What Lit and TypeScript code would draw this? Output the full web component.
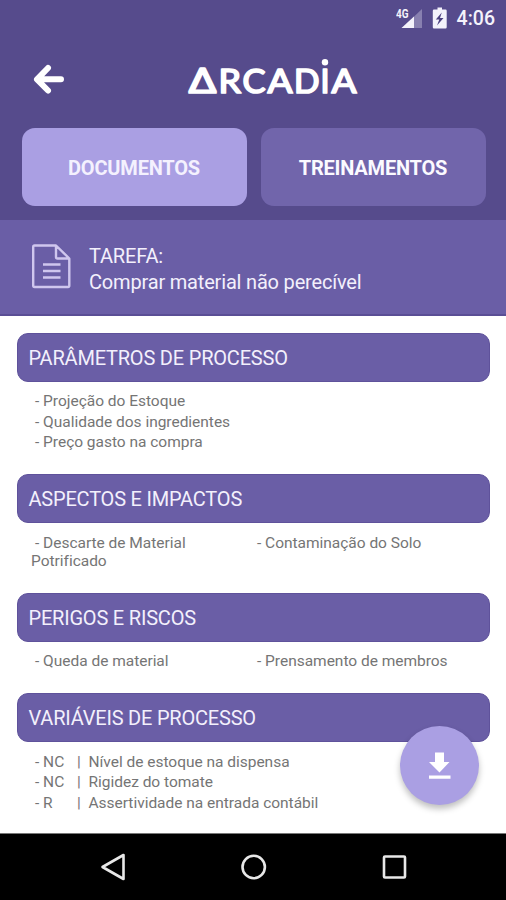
import { LitElement, html, svg, css } from "lit";
import { customElement, property } from "lit/decorators.js";

@customElement("status-bar")
class StatusBar extends LitElement {
  static styles = css`
    :host { display: flex; height: 38px; justify-content: flex-end; align-items: center; padding-right: 11px; color: #f4f2fb; font: 500 19.5px/38px Roboto, sans-serif; }
    .signal { width: 28px; height: 38px; margin-right: 8px; }
    .battery { width: 16px; height: 38px; margin-right: 9px; }
    .net { font: 700 12px "Roboto", sans-serif; }
  `;
  render() {
    return html`
      <svg class="signal" viewBox="0 0 28 38" fill="#f4f2fb">
        <path d="M26 9V28H6Z" opacity=".32" />
        <path d="M18 16.500V28H5.500Z" />
        <text class="net" x="0" y="17.500" textLength="12.500" lengthAdjust="spacingAndGlyphs">4G</text>
      </svg>
      <svg class="battery" viewBox="0 0 16 38">
        <path d="M5.500 7.500h4.500v2h3.500q1.200 0 1.200 1.200v16.600q0 1.200-1.200 1.200h-11.500q-1.200 0-1.200-1.200v-16.600q0-1.200 1.200-1.200h3.500z" fill="#f4f2fb" />
        <path d="M9.800 12.500l-6 7h3.500l-2.300 6 6.500-7.500h-3.500z" fill="#4c4180" />
      </svg>
      <span>4:06</span>
    `;
  }
}

@customElement("process-section")
class ProcessSection extends LitElement {
  @property() heading = "";
  @property({ attribute: false }) items: string[] = [];
  @property({ attribute: false }) pairs: [string, string][] = [];
  @property({ type: Boolean }) columns = false;
  static styles = css`
    :host { display: block; font-family: Roboto, sans-serif; }
    h2 { margin: 0; height: 49px; box-sizing: border-box; padding-left: 10.500px; border-radius: 11px; background: #6a5ea6; border: 1px solid #5f529b; color: #f3f0fc; font-size: 20px; font-weight: 400; line-height: 48px; letter-spacing: -.2px; white-space: nowrap; }
    .list { padding: 9.500px 0 0 18px; color: #757575; font-size: 15.500px; line-height: 20.500px; letter-spacing: -.02px; }
    .grid { display: grid; grid-template-columns: 222px 1fr; padding: 10.500px 0 0 14px; color: #757575; font-size: 15.500px; line-height: 18.500px; letter-spacing: -.02px; }
    .grid div { text-indent: 4px; max-width: 170px; }
    .grid div + div { max-width: none; }
    .row { display: grid; grid-template-columns: 42px 11.500px 1fr; }
  `;
  render() {
    return html`
      <h2>${this.heading}</h2>
      ${this.columns
        ? html`<div class="grid">${this.items.map((t) => html`<div>${"- " + t}</div>`)}</div>`
        : html`<div class="list">
            ${this.items.map((t) => html`<div>${"- " + t}</div>`)}
            ${this.pairs.map(([k, t]) => html`<div class="row"><span>${"- " + k}</span><span>|</span><span>${t}</span></div>`)}
          </div>`}
    `;
  }
}

const LOGO: [string, number, number][] = [
  ["R", 218.5, 22.5],
  ["C", 242.5, 23],
  ["A", 267.5, 25],
  ["D", 294, 25.5],
  ["I", 320.5, 9],
  ["A", 331.5, 25],
];

@customElement("app-root")
class AppRoot extends LitElement {
  static styles = css`
    :host { display: flex; flex-direction: column; position: relative; width: 506px; height: 900px; overflow: hidden; background: #fff; font-family: Roboto, sans-serif; }
    .top { height: 220px; background: #564b8c; }
    .brand { display: flex; height: 90px; }
    .brand svg { width: 506px; height: 90px; }
    .logo { font: 400 32px Lato, sans-serif; }
    .delta { font: 400 34px "Open Sans", sans-serif; }
    .tabs { display: grid; grid-template-columns: 225px 225px; gap: 14px; padding: 0 21.500px; }
    .tab { height: 78px; border-radius: 13px; background: #7165ab; color: #fbfaff; font-size: 20px; font-weight: 700; line-height: 80px; letter-spacing: -.2px; text-align: center; }
    .tab.active { background: #aa9fe3; color: #f4f1fe; }
    .task { display: flex; height: 96px; box-sizing: border-box; background: #6a5ea6; border-bottom: 2px solid #5a4e95; color: #f3f0fc; font-size: 20px; line-height: 26.500px; letter-spacing: -.18px; }
    .task svg { width: 42px; height: 48px; margin: 23px 17px 0 30px; }
    .task .words { padding-top: 22.500px; }
    .content { flex: 1; padding: 16.500px 16px 0 17px; display: flex; flex-direction: column; }
    .s1 { height: 141.500px; }
    .s2 { height: 118.500px; }
    .s3 { height: 100.500px; }
    .fab { position: absolute; left: 400px; top: 726px; width: 79px; height: 79px; border-radius: 50%; background: #aa9fe3; box-shadow: 0 4px 6px rgba(0, 0, 0, .25); }
    .nav { height: 67px; background: #000; box-sizing: border-box; border-top: 1px solid #777; }
    .nav svg { display: block; }
  `;
  render() {
    return html`
      <header class="top">
        <status-bar></status-bar>
        <div class="brand">
          <svg viewBox="0 38 506 90" fill="none" stroke="#fff">
            <path d="M48 68L37 79.300L48 90.500M37.500 79.300H61" stroke-width="6" stroke-linecap="round" stroke-linejoin="round" />
            <g class="logo" fill="#fff" stroke-width="1.700" stroke-linejoin="round">
              <text class="delta" x="188.500" y="93" textLength="28" lengthAdjust="spacingAndGlyphs">Δ</text>
              ${LOGO.map(([c, x, w]) => svg`<text x=${x} y="93" textLength=${w} lengthAdjust="spacingAndGlyphs">${c}</text>`)}
            </g>
            <circle cx="325" cy="62.300" r="3.200" fill="#fff" stroke="none" />
          </svg>
        </div>
        <div class="tabs">
          <div class="tab active">DOCUMENTOS</div>
          <div class="tab">TREINAMENTOS</div>
        </div>
      </header>
      <div class="task">
        <svg viewBox="30 243 42 48" fill="none" stroke="#cfc6ee" stroke-width="2.400" stroke-linejoin="round">
          <path d="M56 245.500H34.500Q33.200 245.500 33.200 247V285.500Q33.200 287 34.500 287H68Q69.300 287 69.300 285.500V258.500ZM56 245.500V257Q56 258.500 57.500 258.500H69.300M43 264.500H60.500M43 271H60.500M43 277.500H60.500" />
        </svg>
        <div class="words"><div>TAREFA:</div><div>Comprar material não perecível</div></div>
      </div>
      <main class="content">
        <process-section class="s1" heading="PARÂMETROS DE PROCESSO" .items=${["Projeção do Estoque", "Qualidade dos ingredientes", "Preço gasto na compra"]}></process-section>
        <process-section class="s2" columns heading="ASPECTOS E IMPACTOS" .items=${["Descarte de Material Potrificado", "Contaminação do Solo"]}></process-section>
        <process-section class="s3" columns heading="PERIGOS E RISCOS" .items=${["Queda de material", "Prensamento de membros"]}></process-section>
        <process-section heading="VARIÁVEIS DE PROCESSO" .pairs=${[["NC", "Nível de estoque na dispensa"], ["NC", "Rigidez do tomate"], ["R", "Assertividade na entrada contábil"]]}></process-section>
      </main>
      <nav class="nav">
        <svg width="506" height="66" viewBox="0 834 506 66" fill="none" stroke="#e8e8e8" stroke-width="2.600" stroke-linejoin="round">
          <path d="M102.500 867L123.500 855V879Z" />
          <circle cx="253.700" cy="867" r="11.200" />
          <rect x="384" y="856.500" width="21" height="21" rx="1" />
        </svg>
      </nav>
      <div class="fab">
        <svg width="79" height="79" viewBox="400 726 79 79" fill="#fff">
          <path d="M435 752.500H444V762H449.500L439.500 772.500L429 762H435ZM429 775.500H450.500V778.800H429Z" />
        </svg>
      </div>
    `;
  }
}
